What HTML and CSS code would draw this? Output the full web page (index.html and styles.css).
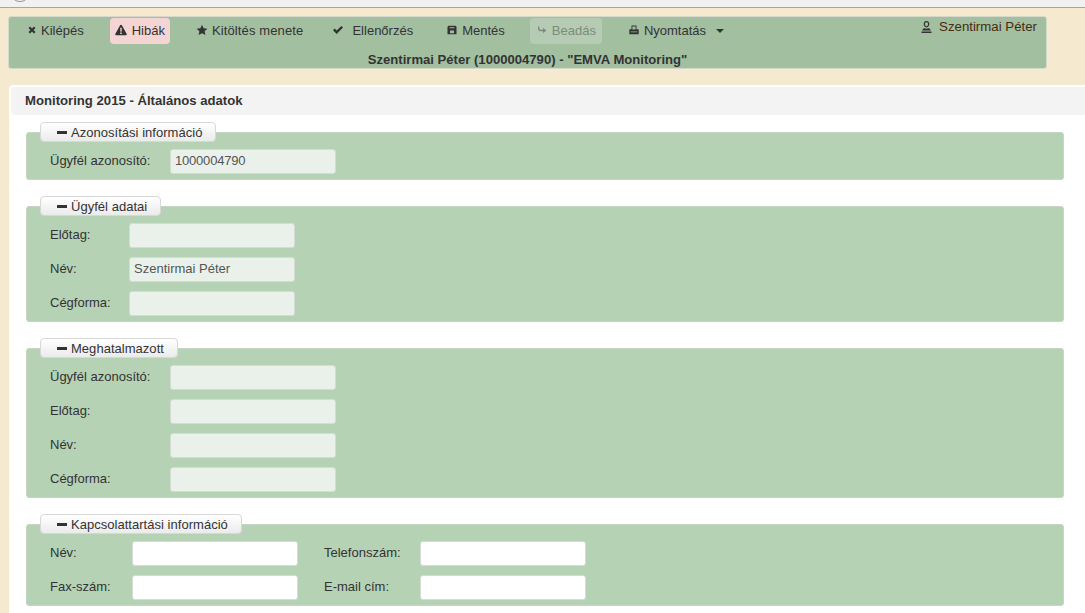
FILE: index.html
```html
<!DOCTYPE html>
<html lang="hu">
<head>
<meta charset="utf-8">
<title>Monitoring 2015</title>
<link rel="stylesheet" href="styles.css">
</head>
<body>
<div class="chrome"><span class="chrome-circle"></span></div>
<header class="toolbar">
  <div class="toolbar-top">
    <nav class="nav">
      <a class="nav-item nav-first"><svg class="ico" viewBox="0 0 10 10"><path d="M1.500 3 3 1.500 5 3.500 7 1.500 8.500 3 6.500 5 8.500 7 7 8.500 5 6.500 3 8.500 1.500 7 3.500 5z"/></svg>Kilépés</a>
      <a class="nav-item nav-danger"><svg class="ico ico-lg" viewBox="0 0 12 12"><path fill-rule="evenodd" d="M6 .8c.4 0 .7.2.9.5l4.800 8.700c.3.6-.1 1.200-.8 1.200H1.100c-.7 0-1.100-.6-.8-1.200L5.100 1.300c.2-.3.500-.5.900-.5zM5.200 3.800l.2 4h1.200l.2-4zM5.200 8.600v1.400h1.600V8.600z"/></svg>Hibák</a>
      <a class="nav-item nav-long"><svg class="ico ico-lg" viewBox="0 0 12 12"><path d="M6 .8l1.600 3.500 3.800.4-2.800 2.600.8 3.800L6 9.200l-3.400 1.900.8-3.800L.6 4.700l3.800-.4z"/></svg>Kitöltés menete</a>
      <a class="nav-item nav-wide"><svg class="ico ico-lg" viewBox="0 0 12 12"><path d="M1 6.300 2.700 4.600 4.700 6.600 9.400 1.900 11 3.600 4.700 9.900z"/></svg>Ellenőrzés</a>
      <a class="nav-item nav-save"><svg class="ico" viewBox="0 0 10 10"><path fill-rule="evenodd" d="M1.500.8h7l1 1v7.400H.5V1.800zM2.600 2.200v1.100h4.800V2.200zM3 5.600v2.600h4V5.600z"/></svg>Mentés</a>
      <a class="nav-item nav-off"><svg class="ico" viewBox="0 0 10 10"><path d="M1 1.500h1.400v1.700c0 1 .6 1.500 1.500 1.500H6V2.800L9.300 5.500 6 8.200V6.200H3.700C2 6.200 1 5.100 1 3.500z"/></svg>Beadás</a>
      <a class="nav-item nav-print"><svg class="ico" viewBox="0 0 10 10"><path fill-rule="evenodd" d="M2.500.5h5v3.800H9c.4 0 .7.300.7.700v4.200H.3V5c0-.4.3-.7.700-.7h1.500zM3.400 1.400v3h3.200v-3zM1.800 6.500v.7h6.400v-.7z"/></svg>Nyomtatás<span class="caret"></span></a>
    </nav>
    <div class="user"><svg class="ico ico-user" viewBox="0 0 11 12"><path fill-rule="evenodd" d="M5.500 0C7.200 0 8.300 1.200 8.300 3S7.200 6.400 5.500 6.400 2.700 4.800 2.700 3 3.800 0 5.500 0zm0 1.200C4.500 1.200 3.900 1.900 3.900 3s.6 2.200 1.600 2.200S7.100 4.100 7.100 3 6.500 1.200 5.500 1.200zM3 7.300h1.400l1.100.6 1.100-.6H8c.9.5 1.600 1.400 1.800 2.300H1.200C1.400 8.700 2.100 7.800 3 7.300zM.5 10.400h10V12H.5z"/></svg>Szentirmai Péter</div>
  </div>
  <div class="toolbar-title">Szentirmai Péter (1000004790) - "EMVA Monitoring"</div>
</header>
<main class="card">
  <h1 class="card-title">Monitoring 2015 - Általános adatok</h1>

  <section class="group">
    <div class="legend"><span class="minus"></span>Azonosítási információ</div>
    <div class="fields cols-120">
      <label>Ügyfél azonosító:</label><input class="ro digits" value="1000004790" readonly>
    </div>
  </section>

  <section class="group">
    <div class="legend"><span class="minus"></span>Ügyfél adatai</div>
    <div class="fields cols-79">
      <label>Előtag:</label><input class="ro" readonly>
      <label>Név:</label><input class="ro" value="Szentirmai Péter" readonly>
      <label>Cégforma:</label><input class="ro" readonly>
    </div>
  </section>

  <section class="group">
    <div class="legend"><span class="minus"></span>Meghatalmazott</div>
    <div class="fields cols-120">
      <label>Ügyfél azonosító:</label><input class="ro" readonly>
      <label>Előtag:</label><input class="ro" readonly>
      <label>Név:</label><input class="ro" readonly>
      <label>Cégforma:</label><input class="ro" readonly>
    </div>
  </section>

  <section class="group">
    <div class="legend"><span class="minus"></span>Kapcsolattartási információ</div>
    <div class="fields cols-contact">
      <label>Név:</label><input>
      <label class="label-next">Telefonszám:</label><input>
      <label>Fax-szám:</label><input>
      <label class="label-next">E-mail cím:</label><input>
    </div>
  </section>
</main>
</body>
</html>
```
FILE: styles.css
```css
* { box-sizing: border-box; }
html, body { margin: 0; height: 100%; overflow: hidden; }
body {
  background: #f5ead0;
  font-family: "Liberation Sans", Arial, sans-serif;
  font-size: 13px;
  color: #333;
}
.chrome {
  height: 8px;
  background: #f1f1f1;
  border-bottom: 1px solid #a5a5a5;
  overflow: hidden;
  padding-left: 10px;
}
.chrome-circle {
  display: block;
  width: 20px;
  height: 20px;
  margin-top: -18px;
  border: 1px solid #8a8a8a;
  border-radius: 50%;
  background: #fff;
}
.toolbar {
  margin: 8px 38px 0 8px;
  height: 53px;
  background: #a2bfa0;
  border: 1px solid #d5d9cc;
  border-radius: 3px;
}
.toolbar-top {
  display: flex;
  justify-content: space-between;
  height: 36px;
}
.nav {
  display: flex;
  align-items: flex-start;
  gap: 21px;
  padding: 1px 0 0 13px;
}
.nav-item {
  display: flex;
  align-items: center;
  height: 26px;
  padding: 0 5px 2px;
  border-radius: 4px;
  color: #333;
  white-space: nowrap;
}
.nav-first .ico { margin-right: 4px; }
.nav-danger { background: #f5d5d3; }
.nav-danger .ico { margin-right: 5px; }
.nav-long { letter-spacing: .13px; margin-right: -2px; }
.nav-wide .ico { margin-right: 8px; }
.nav-save { margin-left: 3px; }
.nav-off { background: #b5cbb4; color: #7c8c7a; padding: 0 6px 2px 7px; margin-left: -1px; }
.nav-off .ico { fill: #7c8c7a; margin-right: 5px; }
.nav-print { margin-left: 1px; }
.ico {
  width: 10px;
  height: 10px;
  margin-right: 5px;
  fill: #333;
  flex: none;
}
.ico-lg { width: 12px; height: 12px; margin-right: 4px; }
.caret {
  width: 0;
  height: 0;
  margin: 2px 0 0 10px;
  border-left: 4px solid transparent;
  border-right: 4px solid transparent;
  border-top: 4px solid #333;
}
.user {
  display: flex;
  align-items: center;
  height: 18px;
  margin-right: 9px;
  font-size: 13.250px;
  color: #4a2a10;
}
.ico-user { width: 11px; height: 12px; margin: 2px 7px 0 0; fill: #333; }
.toolbar-title {
  text-align: center;
  font-size: 13.100px;
  font-weight: bold;
  line-height: 14px;
  color: #333;
}
.card {
  margin: 16px 0 0 9px;
  padding: 2px 21px 0 2px;
  min-height: 540px;
  background: #fff;
  border-radius: 4px 0 0 0;
}
.card-title {
  margin: 0 -21px 0 0;
  height: 28px;
  padding-left: 14px;
  line-height: 28px;
  font-size: 13.150px;
  font-weight: bold;
  color: #333;
  background: #f3f3f3;
  border-radius: 4px 0 0 4px;
}
.group {
  position: relative;
  margin: 0 0 26px 15px;
  padding: 16px 0 5px;
  background: #b5d2b5;
  border: 1px solid #c6d6c2;
  border-radius: 3px;
}
.card-title + .group { margin-top: 17px; }
.legend {
  position: absolute;
  left: 13px;
  top: -11px;
  display: flex;
  align-items: center;
  height: 20px;
  padding: 0 13px 0 16px;
  letter-spacing: .03px;
  color: #333;
  background: linear-gradient(#fff, #ebebeb);
  border: 1px solid #d8d8d8;
  border-radius: 4px;
}
.minus {
  width: 10px;
  height: 3px;
  margin-right: 4px;
  background: #333;
}
.fields {
  display: grid;
  align-items: center;
  row-gap: 9px;
  padding-left: 23px;
}
.fields label { padding-bottom: 2px; color: #333; }
.cols-120 { grid-template-columns: 120px 166px; }
.cols-79 { grid-template-columns: 79px 166px; }
.cols-contact { grid-template-columns: 82px 166px 122px 166px; }
.fields .label-next { padding-left: 26px; }
input {
  width: 166px;
  height: 25px;
  padding: 0 4px 2px;
  font: 13px "Liberation Sans", Arial, sans-serif;
  color: #555;
  background: #fff;
  border: 1px solid #d5dcd2;
  border-radius: 3px;
  outline: none;
}
input.ro { background: #eaf1ea; }
input.digits { letter-spacing: -.2px; }
```
